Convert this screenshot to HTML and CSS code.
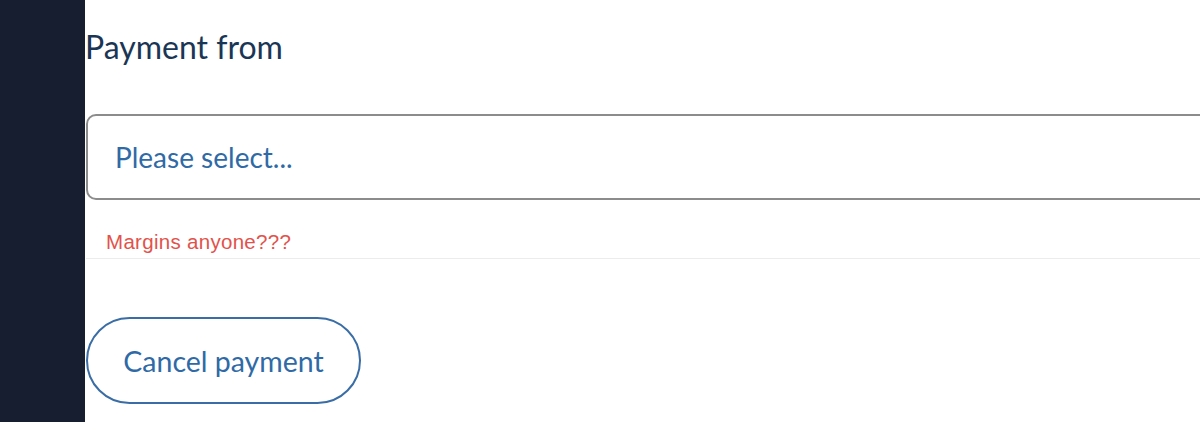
FILE: index.html
```html
<!DOCTYPE html>
<html>
<head>
<meta charset="utf-8">
<link rel="stylesheet" href="styles.css">
</head>
<body>
<div class="layout">
  <aside class="sidebar"></aside>
  <main class="main">
    <h1 class="title">Payment from</h1>
    <div class="select">Please select...</div>
    <div class="error">Margins anyone???</div>
    <div class="divider"></div>
    <button class="cancel">Cancel payment</button>
  </main>
</div>
</body>
</html>
```

FILE: styles.css
```css
html, body {
  margin: 0;
  padding: 0;
  background: #ffffff;
  height: 100%;
  overflow: hidden;
}
.layout {
  display: flex;
  height: 422px;
}
.sidebar {
  width: 85px;
  flex: 0 0 85px;
  background: #161e30;
}
.main {
  flex: 1;
  padding-left: 1px;
  display: flex;
  flex-direction: column;
  font-family: Lato, "Noto Sans", sans-serif;
}
.title {
  margin: 27px 0 0 -1px;
  font-weight: 400;
  font-size: 32px;
  line-height: 40px;
  color: #1b3655;
}
.select {
  margin-top: 47px;
  height: 82px;
  margin-right: -20px;
  border: 2px solid #8c8c8c;
  border-radius: 10px;
  box-sizing: content-box;
  padding-left: 27px;
  display: flex;
  align-items: center;
  font-size: 28px;
  color: #2f6aa6;
}
.error {
  margin: 31px 0 0 20px;
  font-family: "Liberation Sans", Arial, sans-serif;
  font-size: 20.5px;
  letter-spacing: 0.3px;
  line-height: 22px;
  color: #e2524b;
}
.divider {
  margin-top: 5px;
  height: 1px;
  background: #ececec;
}
.cancel {
  margin-top: 58px;
  align-self: flex-start;
  width: 275px;
  height: 87px;
  border: 2px solid #3a6da5;
  border-radius: 44px;
  background: #ffffff;
  font-family: Lato, "Noto Sans", sans-serif;
  font-size: 28.5px;
  color: #2f6aa6;
  padding: 0;
}
```
